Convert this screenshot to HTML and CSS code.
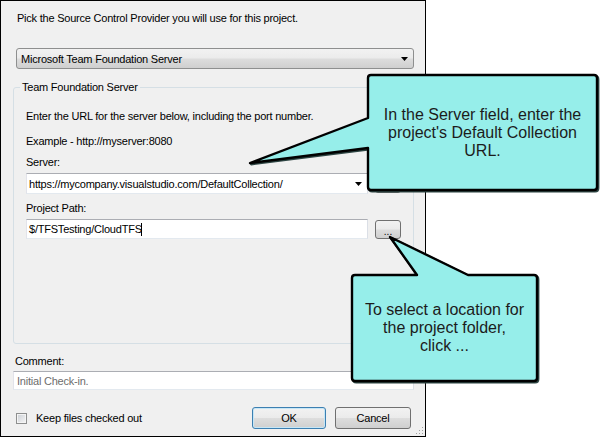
FILE: index.html
```html
<!DOCTYPE html>
<html>
<head>
<meta charset="utf-8">
<link rel="stylesheet" href="styles.css">
</head>
<body>
<div class="page">
  <div class="dialog">
    <div class="intro">Pick the Source Control Provider you will use for this project.</div>
    <div class="select">
      <span class="select-text">Microsoft Team Foundation Server</span>
      <svg class="arrow" width="7" height="4" viewBox="0 0 7 4"><path d="M0 0h7L3.5 4z" fill="#000"/></svg>
    </div>
    <div class="group">
      <span class="legend">Team Foundation Server</span>
      <div class="line first">Enter the URL for the server below, including the port number.</div>
      <div class="line second">Example - http://myserver:8080</div>
      <div class="line label">Server:</div>
      <div class="field-row">
        <div class="combo">
          <span class="field-text">https://mycompany.visualstudio.com/DefaultCollection/</span>
          <svg class="arrow" width="7" height="4" viewBox="0 0 7 4"><path d="M0 0h7L3.5 4z" fill="#000"/></svg>
        </div>
        <div class="browse">...</div>
      </div>
      <div class="line label">Project Path:</div>
      <div class="field-row">
        <div class="textbox"><span class="field-text">$/TFSTesting/CloudTFS</span><span class="caret"></span></div>
        <div class="browse">...</div>
      </div>
    </div>
    <div class="comment-label">Comment:</div>
    <div class="comment-box"><span class="placeholder">Initial Check-in.</span></div>
    <div class="bottom-row">
      <span class="checkbox"></span>
      <span class="check-label">Keep files checked out</span>
      <span class="spacer"></span>
      <div class="btn btn-default">OK</div>
      <div class="btn">Cancel</div>
    </div>
    <svg class="grip" width="8" height="8" viewBox="0 0 8 8">
      <rect x="6" y="0" width="1" height="1" fill="#a0a0a0"/>
      <rect x="3" y="3" width="1" height="1" fill="#a0a0a0"/>
      <rect x="6" y="3" width="1" height="1" fill="#a0a0a0"/>
      <rect x="0" y="6" width="1" height="1" fill="#a0a0a0"/>
      <rect x="3" y="6" width="1" height="1" fill="#a0a0a0"/>
      <rect x="6" y="6" width="1" height="1" fill="#a0a0a0"/>
    </svg>
  </div>

  <svg class="callouts" width="606" height="437" viewBox="0 0 606 437">
    <g transform="translate(1.2,1.2)" fill="none" stroke="#2c4442" stroke-width="2.4" stroke-linejoin="round">
      <path d="M371,75 H594 Q597,75 597,78 V187 Q597,190 594,190 H371 Q368,190 368,187 V148 L250,163 L368,118 V78 Q368,75 371,75 Z"/>
      <path d="M355,275 H417 L390,237 L468,275 H534 Q537,275 537,278 V378 Q537,381 534,381 H355 Q352,381 352,378 V278 Q352,275 355,275 Z"/>
    </g>
    <g fill="#96eeea" stroke="#000" stroke-width="2.4" stroke-linejoin="round">
      <path d="M371,75 H594 Q597,75 597,78 V187 Q597,190 594,190 H371 Q368,190 368,187 V148 L250,163 L368,118 V78 Q368,75 371,75 Z"/>
      <path d="M355,275 H417 L390,237 L468,275 H534 Q537,275 537,278 V378 Q537,381 534,381 H355 Q352,381 352,378 V278 Q352,275 355,275 Z"/>
    </g>
  </svg>
  <div class="callout-text callout-one">In the Server field, enter the<br>project's Default Collection<br>URL.</div>
  <div class="callout-text callout-two">To select a location for<br>the project folder,<br>click ...</div>
</div>
</body>
</html>
```

FILE: styles.css
```css
* { box-sizing: border-box; }
html, body {
  margin: 0;
  padding: 0;
  background: #ffffff;
}
.page {
  position: relative;
  width: 606px;
  height: 437px;
  overflow: hidden;
}
.dialog {
  position: relative;
  width: 426px;
  height: 437px;
  border: 1px solid #000;
  background: #f0f0f0;
  display: flex;
  flex-direction: column;
  align-items: flex-start;
  font-family: "Liberation Sans", Arial, sans-serif;
  font-size: 11px;
  letter-spacing: -0.22px;
  line-height: 14px;
  color: #000;
}
.intro {
  margin-top: 10px;
  margin-left: 16px;
  white-space: nowrap;
}
.select {
  margin-top: 23px;
  margin-left: 15px;
  width: 398px;
  height: 21px;
  border: 1px solid #8e8f8f;
  border-radius: 3px;
  background: linear-gradient(#f2f2f2 0%, #ebebeb 48%, #dddddd 52%, #cfcfcf 100%);
  display: flex;
  align-items: center;
  padding-left: 4px;
  padding-right: 5px;
}
.select-text, .field-text { flex: 1; white-space: nowrap; }
.arrow { flex: none; }
.group {
  margin-top: 18px;
  margin-left: 12px;
  width: 401px;
  height: 257px;
  border: 1px solid #d5dfe5;
  border-radius: 3px;
  display: flex;
  flex-direction: column;
  align-items: flex-start;
  padding-left: 12px;
}
.legend {
  margin-top: -8px;
  margin-left: -6px;
  padding: 0 2px;
  background: #f0f0f0;
  white-space: nowrap;
}
.line { white-space: nowrap; }
.line.first { margin-top: 15px; }
.line.second { margin-top: 11px; }
.line.label { margin-top: 7px; }
.field-row {
  margin-top: 4px;
  display: flex;
  align-items: flex-start;
}
.combo, .textbox {
  width: 342px;
  height: 21px;
  background: #fff;
  border: 1px solid;
  border-color: #abadb3 #dbdfe6 #e3e9ef #e2e3ea;
  display: flex;
  align-items: center;
  padding-left: 2px;
  padding-right: 5px;
}
.textbox { height: 20px; }
.caret {
  width: 1px;
  height: 13px;
  background: #000;
  margin-left: -1px;
  flex: none;
}
.textbox .field-text { flex: none; }
.browse {
  margin-left: 7px;
  margin-top: 1px;
  width: 26px;
  height: 19px;
  border: 1px solid #707070;
  border-radius: 3px;
  background: linear-gradient(#f2f2f2 0%, #ebebeb 48%, #dddddd 52%, #cfcfcf 100%);
  text-align: center;
  line-height: 22px;
  font-size: 10px;
  letter-spacing: 0;
}
.comment-label {
  margin-top: 10px;
  margin-left: 14px;
}
.comment-box {
  margin-top: 3px;
  margin-left: 12px;
  width: 401px;
  height: 19px;
  background: #fff;
  border: 1px solid;
  border-color: #abadb3 #dbdfe6 #e3e9ef #e2e3ea;
  display: flex;
  align-items: center;
  padding-left: 3px;
}
.placeholder { color: #6d6d6d; white-space: nowrap; }
.bottom-row {
  margin-top: 17px;
  width: 100%;
  display: flex;
  align-items: center;
  padding-left: 15px;
  padding-right: 14px;
}
.checkbox {
  width: 11px;
  height: 11px;
  border: 1px solid #8e8f8f;
  background: linear-gradient(135deg, #cbcfd5 0%, #f6f6f6 100%);
  box-shadow: inset 0 0 0 1px #f4f4f4;
  flex: none;
}
.check-label {
  margin-left: 9px;
  white-space: nowrap;
}
.spacer { flex: 1; }
.btn {
  width: 76px;
  height: 22px;
  border: 1px solid #707070;
  border-radius: 3px;
  background: linear-gradient(#f2f2f2 0%, #ebebeb 48%, #dddddd 52%, #cfcfcf 100%);
  display: flex;
  align-items: center;
  justify-content: center;
  margin-left: 9px;
}
.btn-default {
  width: 74px;
  border-color: #3c7fb1;
  box-shadow: inset 0 0 0 1px #c6e6f6;
}
.grip {
  position: absolute;
  right: 1px;
  bottom: 1px;
}
.callouts {
  position: absolute;
  left: 0;
  top: 0;
  pointer-events: none;
}
.callout-text {
  position: absolute;
  display: flex;
  align-items: center;
  justify-content: center;
  text-align: center;
  font-family: "Liberation Sans", Arial, sans-serif;
  font-size: 16px;
  line-height: 18px;
  color: #1c1c1c;
  white-space: nowrap;
}
.callout-one {
  left: 368px;
  top: 75px;
  width: 229px;
  height: 115px;
}
.callout-two {
  left: 352px;
  top: 275px;
  width: 185px;
  height: 106px;
}
```
